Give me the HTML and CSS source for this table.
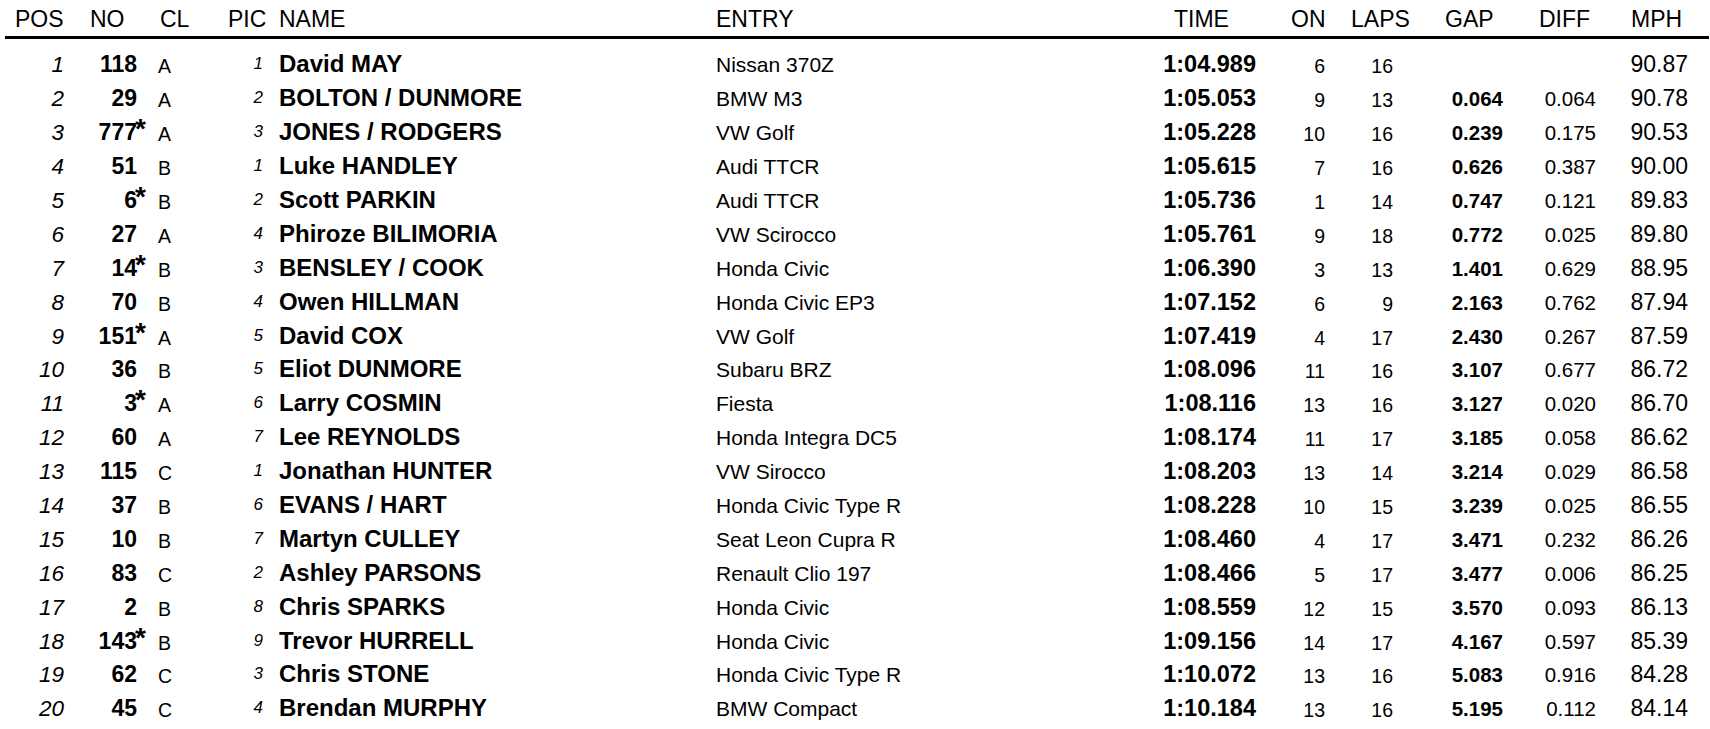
FILE: index.html
```html
<!DOCTYPE html>
<html>
<head>
<meta charset="utf-8">
<link rel="stylesheet" href="styles.css">
</head>
<body>
<div class="sheet">
  <div class="head">
    <div>POS</div><div>NO</div><div>CL</div><div>PIC</div><div>NAME</div><div>ENTRY</div><div>TIME</div><div>ON</div><div>LAPS</div><div>GAP</div><div>DIFF</div><div>MPH</div>
  </div>
  <div class="rows">
    <div class="row"><div class="pos">1</div><div class="no">118</div><div class="cl"><span>A</span></div><div class="pic"><span>1</span></div><div class="name">David MAY</div><div class="entry">Nissan 370Z</div><div class="time">1:04.989</div><div class="on"><span>6</span></div><div class="laps"><span>16</span></div><div class="gap"></div><div class="diff"></div><div class="mph">90.87</div></div>
    <div class="row"><div class="pos">2</div><div class="no">29</div><div class="cl"><span>A</span></div><div class="pic"><span>2</span></div><div class="name">BOLTON / DUNMORE</div><div class="entry">BMW M3</div><div class="time">1:05.053</div><div class="on"><span>9</span></div><div class="laps"><span>13</span></div><div class="gap">0.064</div><div class="diff">0.064</div><div class="mph">90.78</div></div>
    <div class="row"><div class="pos">3</div><div class="no">777<span class="ast">*</span></div><div class="cl"><span>A</span></div><div class="pic"><span>3</span></div><div class="name">JONES / RODGERS</div><div class="entry">VW Golf</div><div class="time">1:05.228</div><div class="on"><span>10</span></div><div class="laps"><span>16</span></div><div class="gap">0.239</div><div class="diff">0.175</div><div class="mph">90.53</div></div>
    <div class="row"><div class="pos">4</div><div class="no">51</div><div class="cl"><span>B</span></div><div class="pic"><span>1</span></div><div class="name">Luke HANDLEY</div><div class="entry">Audi TTCR</div><div class="time">1:05.615</div><div class="on"><span>7</span></div><div class="laps"><span>16</span></div><div class="gap">0.626</div><div class="diff">0.387</div><div class="mph">90.00</div></div>
    <div class="row"><div class="pos">5</div><div class="no">6<span class="ast">*</span></div><div class="cl"><span>B</span></div><div class="pic"><span>2</span></div><div class="name">Scott PARKIN</div><div class="entry">Audi TTCR</div><div class="time">1:05.736</div><div class="on"><span>1</span></div><div class="laps"><span>14</span></div><div class="gap">0.747</div><div class="diff">0.121</div><div class="mph">89.83</div></div>
    <div class="row"><div class="pos">6</div><div class="no">27</div><div class="cl"><span>A</span></div><div class="pic"><span>4</span></div><div class="name">Phiroze BILIMORIA</div><div class="entry">VW Scirocco</div><div class="time">1:05.761</div><div class="on"><span>9</span></div><div class="laps"><span>18</span></div><div class="gap">0.772</div><div class="diff">0.025</div><div class="mph">89.80</div></div>
    <div class="row"><div class="pos">7</div><div class="no">14<span class="ast">*</span></div><div class="cl"><span>B</span></div><div class="pic"><span>3</span></div><div class="name">BENSLEY / COOK</div><div class="entry">Honda Civic</div><div class="time">1:06.390</div><div class="on"><span>3</span></div><div class="laps"><span>13</span></div><div class="gap">1.401</div><div class="diff">0.629</div><div class="mph">88.95</div></div>
    <div class="row"><div class="pos">8</div><div class="no">70</div><div class="cl"><span>B</span></div><div class="pic"><span>4</span></div><div class="name">Owen HILLMAN</div><div class="entry">Honda Civic EP3</div><div class="time">1:07.152</div><div class="on"><span>6</span></div><div class="laps"><span>9</span></div><div class="gap">2.163</div><div class="diff">0.762</div><div class="mph">87.94</div></div>
    <div class="row"><div class="pos">9</div><div class="no">151<span class="ast">*</span></div><div class="cl"><span>A</span></div><div class="pic"><span>5</span></div><div class="name">David COX</div><div class="entry">VW Golf</div><div class="time">1:07.419</div><div class="on"><span>4</span></div><div class="laps"><span>17</span></div><div class="gap">2.430</div><div class="diff">0.267</div><div class="mph">87.59</div></div>
    <div class="row"><div class="pos">10</div><div class="no">36</div><div class="cl"><span>B</span></div><div class="pic"><span>5</span></div><div class="name">Eliot DUNMORE</div><div class="entry">Subaru BRZ</div><div class="time">1:08.096</div><div class="on"><span>11</span></div><div class="laps"><span>16</span></div><div class="gap">3.107</div><div class="diff">0.677</div><div class="mph">86.72</div></div>
    <div class="row"><div class="pos">11</div><div class="no">3<span class="ast">*</span></div><div class="cl"><span>A</span></div><div class="pic"><span>6</span></div><div class="name">Larry COSMIN</div><div class="entry">Fiesta</div><div class="time">1:08.116</div><div class="on"><span>13</span></div><div class="laps"><span>16</span></div><div class="gap">3.127</div><div class="diff">0.020</div><div class="mph">86.70</div></div>
    <div class="row"><div class="pos">12</div><div class="no">60</div><div class="cl"><span>A</span></div><div class="pic"><span>7</span></div><div class="name">Lee REYNOLDS</div><div class="entry">Honda Integra DC5</div><div class="time">1:08.174</div><div class="on"><span>11</span></div><div class="laps"><span>17</span></div><div class="gap">3.185</div><div class="diff">0.058</div><div class="mph">86.62</div></div>
    <div class="row"><div class="pos">13</div><div class="no">115</div><div class="cl"><span>C</span></div><div class="pic"><span>1</span></div><div class="name">Jonathan HUNTER</div><div class="entry">VW Sirocco</div><div class="time">1:08.203</div><div class="on"><span>13</span></div><div class="laps"><span>14</span></div><div class="gap">3.214</div><div class="diff">0.029</div><div class="mph">86.58</div></div>
    <div class="row"><div class="pos">14</div><div class="no">37</div><div class="cl"><span>B</span></div><div class="pic"><span>6</span></div><div class="name">EVANS / HART</div><div class="entry">Honda Civic Type R</div><div class="time">1:08.228</div><div class="on"><span>10</span></div><div class="laps"><span>15</span></div><div class="gap">3.239</div><div class="diff">0.025</div><div class="mph">86.55</div></div>
    <div class="row"><div class="pos">15</div><div class="no">10</div><div class="cl"><span>B</span></div><div class="pic"><span>7</span></div><div class="name">Martyn CULLEY</div><div class="entry">Seat Leon Cupra R</div><div class="time">1:08.460</div><div class="on"><span>4</span></div><div class="laps"><span>17</span></div><div class="gap">3.471</div><div class="diff">0.232</div><div class="mph">86.26</div></div>
    <div class="row"><div class="pos">16</div><div class="no">83</div><div class="cl"><span>C</span></div><div class="pic"><span>2</span></div><div class="name">Ashley PARSONS</div><div class="entry">Renault Clio 197</div><div class="time">1:08.466</div><div class="on"><span>5</span></div><div class="laps"><span>17</span></div><div class="gap">3.477</div><div class="diff">0.006</div><div class="mph">86.25</div></div>
    <div class="row"><div class="pos">17</div><div class="no">2</div><div class="cl"><span>B</span></div><div class="pic"><span>8</span></div><div class="name">Chris SPARKS</div><div class="entry">Honda Civic</div><div class="time">1:08.559</div><div class="on"><span>12</span></div><div class="laps"><span>15</span></div><div class="gap">3.570</div><div class="diff">0.093</div><div class="mph">86.13</div></div>
    <div class="row"><div class="pos">18</div><div class="no">143<span class="ast">*</span></div><div class="cl"><span>B</span></div><div class="pic"><span>9</span></div><div class="name">Trevor HURRELL</div><div class="entry">Honda Civic</div><div class="time">1:09.156</div><div class="on"><span>14</span></div><div class="laps"><span>17</span></div><div class="gap">4.167</div><div class="diff">0.597</div><div class="mph">85.39</div></div>
    <div class="row"><div class="pos">19</div><div class="no">62</div><div class="cl"><span>C</span></div><div class="pic"><span>3</span></div><div class="name">Chris STONE</div><div class="entry">Honda Civic Type R</div><div class="time">1:10.072</div><div class="on"><span>13</span></div><div class="laps"><span>16</span></div><div class="gap">5.083</div><div class="diff">0.916</div><div class="mph">84.28</div></div>
    <div class="row"><div class="pos">20</div><div class="no">45</div><div class="cl"><span>C</span></div><div class="pic"><span>4</span></div><div class="name">Brendan MURPHY</div><div class="entry">BMW Compact</div><div class="time">1:10.184</div><div class="on"><span>13</span></div><div class="laps"><span>16</span></div><div class="gap">5.195</div><div class="diff">0.112</div><div class="mph">84.14</div></div>
    <div class="row"><div class="pos"></div><div class="no">&nbsp;<span class="ast">*</span></div><div class="cl"></div><div class="pic"></div><div class="name"></div><div class="entry"></div><div class="time"></div><div class="on"></div><div class="laps"></div><div class="gap"></div><div class="diff"></div><div class="mph"></div></div>
  </div>
</div>
</body>
</html>
```
FILE: styles.css
```css
html {
  overflow: hidden;
  background: #fff;
}
body {
  margin: 0;
  color: #000;
  font-family: "Liberation Sans", Arial, sans-serif;
}
.sheet {
  width: 1710px;
}
.head {
  display: grid;
  grid-template-columns: 75px 70px 68px 51px 437px 458px 117px 60px 94px 94px 92px auto;
  margin: 0 1px 0 5px;
  padding: 4px 0 2px 10px;
  font-size: 23px;
  line-height: 30px;
  border-bottom: 3px solid #000;
}
.rows {
  margin-top: 13.4px;
}
.row {
  display: grid;
  grid-template-columns: 64px 73px 63px 63px 453px 434px 106px 69px 68px 110px 93px 92px;
  align-items: baseline;
  height: 33.9px;
  line-height: 24px;
  white-space: nowrap;
}
.pos {
  text-align: right;
  font-style: italic;
  font-size: 22.5px;
}
.no {
  text-align: right;
  font-weight: bold;
  font-size: 23px;
}
.ast {
  font-size: 28px;
  line-height: 0;
  vertical-align: 2px;
  margin-left: -2px;
  margin-right: -8.9px;
}
.cl {
  padding-left: 21px;
  font-size: 19.5px;
}
.cl span,
.on span,
.laps span {
  line-height: 1;
  vertical-align: -1.3px;
}
.pic {
  text-align: right;
  font-style: italic;
  font-size: 17px;
}
.pic span {
  line-height: 1;
  vertical-align: 3px;
}
.name {
  padding-left: 16px;
  font-weight: bold;
  font-size: 24px;
}
.entry {
  font-size: 21px;
}
.time {
  text-align: right;
  font-weight: bold;
  font-size: 23.5px;
}
.on,
.laps {
  text-align: right;
  font-size: 19.5px;
}
.gap {
  text-align: right;
  font-weight: bold;
  font-size: 20.5px;
}
.diff {
  text-align: right;
  font-size: 20.5px;
}
.mph {
  text-align: right;
  font-size: 23px;
}
```
